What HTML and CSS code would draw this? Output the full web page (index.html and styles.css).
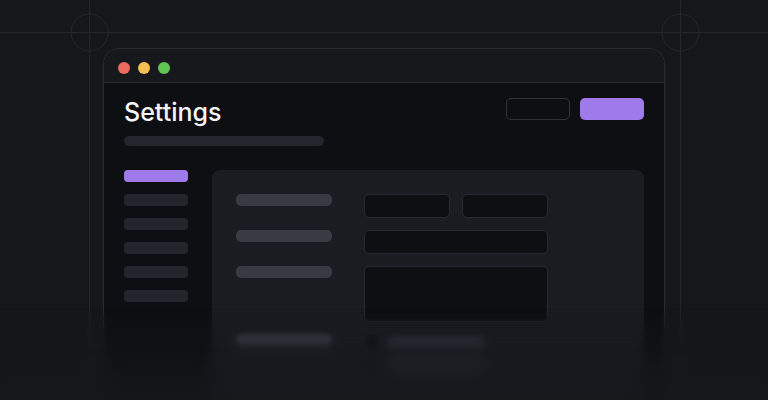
FILE: index.html
```html
<!DOCTYPE html>
<html lang="en">
<head>
<meta charset="utf-8">
<title>Settings</title>
<link rel="stylesheet" href="styles.css">
</head>
<body>
<div class="stage">
  <svg class="guides" width="768" height="400" viewBox="0 0 768 400" aria-hidden="true">
    <line x1="0" y1="32.5" x2="768" y2="32.5"/>
    <line x1="89.5" y1="0" x2="89.5" y2="400"/>
    <line x1="680.5" y1="0" x2="680.5" y2="400"/>
    <circle cx="89.5" cy="32.5" r="18.5"/>
    <circle cx="680.5" cy="32.5" r="18.5"/>
  </svg>
  <div class="window">
    <div class="titlebar">
      <span class="dot dot-red"></span>
      <span class="dot dot-yellow"></span>
      <span class="dot dot-green"></span>
    </div>
    <div class="content">
      <header class="head">
        <div class="titles">
          <h1 class="title">Settings</h1>
          <div class="sub"></div>
        </div>
        <div class="actions">
          <span class="btn btn-ghost"></span>
          <span class="btn btn-primary"></span>
        </div>
      </header>
      <div class="main">
        <nav class="side">
          <span class="nav-item active"></span>
          <span class="nav-item"></span>
          <span class="nav-item"></span>
          <span class="nav-item"></span>
          <span class="nav-item"></span>
          <span class="nav-item"></span>
        </nav>
        <section class="panel">
          <div class="label"></div>
          <div class="fields fields-two">
            <div class="input"></div>
            <div class="input"></div>
          </div>
          <div class="label"></div>
          <div class="input"></div>
          <div class="label"></div>
          <div class="input textarea"></div>
          <div class="label"></div>
          <div class="checks">
            <div class="check"><span class="box"></span><span class="check-text"></span></div>
            <div class="check"><span class="box"></span><span class="check-text"></span></div>
          </div>
        </section>
      </div>
    </div>
  </div>
  <div class="fade">
    <div class="blur blur-1"></div>
    <div class="blur blur-2"></div>
    <div class="blur blur-3"></div>
    <div class="tint"></div>
  </div>
</div>
</body>
</html>
```
FILE: styles.css
```css
html, body {
  margin: 0;
  padding: 0;
  background: #15171b;
  overflow: hidden;
}
body {
  width: 768px;
  height: 400px;
  font-family: Inter, "Noto Sans", "Liberation Sans", sans-serif;
}
.stage {
  position: relative;
  width: 768px;
  height: 400px;
  overflow: hidden;
  padding-top: 48px;
  box-sizing: border-box;
}
.guides {
  position: absolute;
  left: 0;
  top: 0;
}
.guides line,
.guides circle {
  stroke: #24272d;
  stroke-width: 1;
  fill: none;
}
.window {
  position: relative;
  margin-left: 103px;
  width: 562px;
  height: 420px;
  box-sizing: border-box;
  border: 1px solid #2a2d33;
  border-bottom: none;
  border-radius: 16px 16px 0 0;
  background: #0e0f12;
  overflow: hidden;
}
.titlebar {
  height: 34px;
  box-sizing: border-box;
  padding: 13px 0 0 14px;
  display: flex;
  gap: 8px;
  background: #16181c;
  border-bottom: 1px solid #2a2d33;
}
.dot {
  width: 12px;
  height: 12px;
  border-radius: 50%;
}
.dot-red { background: #ec6a5e; }
.dot-yellow { background: #f4bf4f; }
.dot-green { background: #61c554; }
.content {
  padding: 15px 20px 0 20px;
}
.head {
  display: flex;
  justify-content: space-between;
  align-items: flex-start;
}
.title {
  margin: 0;
  font-size: 25px;
  line-height: 28px;
  font-weight: 500;
  color: #f4f5f7;
}
.sub {
  margin-top: 10px;
  width: 200px;
  height: 10px;
  border-radius: 5px;
  background: #23262c;
}
.actions {
  display: flex;
  gap: 10px;
}
.btn {
  display: block;
  width: 64px;
  height: 22px;
  box-sizing: border-box;
  border-radius: 5px;
}
.btn-ghost {
  border: 1px solid #30333a;
}
.btn-primary {
  background: #9f7aea;
}
.main {
  margin-top: 24px;
  display: flex;
  gap: 24px;
}
.side {
  width: 64px;
  display: flex;
  flex-direction: column;
  gap: 12px;
  flex-shrink: 0;
}
.nav-item {
  display: block;
  height: 12px;
  border-radius: 4px;
  background: #23262d;
}
.nav-item.active {
  background: #9f7aea;
}
.panel {
  flex: 1;
  min-height: 260px;
  border-radius: 8px;
  background: #1a1c22;
  padding: 24px;
  display: grid;
  grid-template-columns: 96px 184px;
  column-gap: 32px;
  row-gap: 12px;
  align-content: start;
  align-items: start;
}
.label {
  height: 12px;
  border-radius: 5px;
  background: #383b43;
}
.fields-two {
  display: flex;
  gap: 12px;
}
.fields-two .input {
  flex: 1;
}
.input {
  height: 24px;
  box-sizing: border-box;
  border: 1.5px solid #282b33;
  border-radius: 5px;
  background: #0e0f12;
}
.textarea {
  height: 56px;
}
.checks {
  padding-top: 2px;
  display: flex;
  flex-direction: column;
  gap: 12px;
}
.check {
  display: flex;
  align-items: center;
  gap: 10px;
}
.box {
  width: 12px;
  height: 12px;
  margin-left: 2px;
  border-radius: 2px;
  background: #0f1013;
  box-shadow: 0 0 0 1px #1f2228;
}
.check-text {
  width: 96px;
  height: 12px;
  border-radius: 5px;
  background: #2c2f36;
}
.fade {
  position: absolute;
  left: 0;
  right: 0;
  bottom: 0;
  height: 92px;
}
.blur {
  position: absolute;
  inset: 0;
}
.blur-1 {
  backdrop-filter: blur(2px);
  -webkit-mask-image: linear-gradient(to bottom, transparent 0%, #000 25%);
  mask-image: linear-gradient(to bottom, transparent 0%, #000 25%);
}
.blur-2 {
  backdrop-filter: blur(5px);
  -webkit-mask-image: linear-gradient(to bottom, transparent 25%, #000 50%);
  mask-image: linear-gradient(to bottom, transparent 25%, #000 50%);
}
.blur-3 {
  backdrop-filter: blur(10px);
  -webkit-mask-image: linear-gradient(to bottom, transparent 45%, #000 80%);
  mask-image: linear-gradient(to bottom, transparent 45%, #000 80%);
}
.tint {
  position: absolute;
  inset: 0;
  background: linear-gradient(to bottom, rgba(22, 24, 28, 0) 0%, rgba(22, 24, 28, 0.35) 45%, rgba(22, 24, 28, 0.85) 100%);
}
```
